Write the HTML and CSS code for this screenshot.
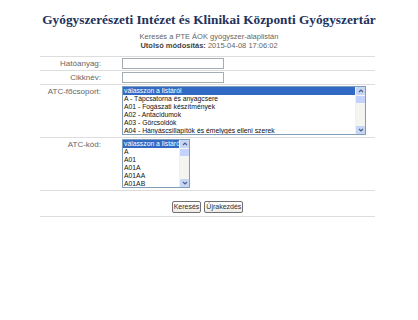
FILE: index.html
```html
<!DOCTYPE html>
<html lang="hu">
<head>
<meta charset="utf-8">
<title>Gyógyszerészeti Intézet és Klinikai Központi Gyógyszertár</title>
<link rel="stylesheet" href="styles.css">
</head>
<body>
<h1 class="title">Gyógyszerészeti Intézet és Klinikai Központi Gyógyszertár</h1>
<div class="sub">
  <div>Keresés a PTE ÁOK gyógyszer-alaplistán</div>
  <div><b>Utolsó módosítás:</b> 2015-04-08 17:06:02</div>
</div>
<div class="form">
  <div class="row row-input">
    <div class="label">Hatóanyag:</div>
    <div class="field"><div class="input"></div></div>
  </div>
  <div class="row row-input">
    <div class="label">Cikknév:</div>
    <div class="field"><div class="input"></div></div>
  </div>
  <div class="row row-list">
    <div class="label">ATC-főcsoport:</div>
    <div class="field">
      <div class="listbox wide">
        <div class="items">
          <div class="item sel">válasszon a listáról</div>
          <div class="item">A - Tápcsatorna és anyagcsere</div>
          <div class="item">A01 - Fogászati készítmények</div>
          <div class="item">A02 - Antacidumok</div>
          <div class="item">A03 - Görcsoldók</div>
          <div class="item">A04 - Hányáscsillapítók és émelygés elleni szerek</div>
        </div>
        <div class="sbar">
          <div class="sbtn"><svg viewBox="0 0 8 8" width="8" height="8"><path d="M2 5 L4 3 L6 5" fill="none" stroke="#4d6185" stroke-width="1.2"/></svg></div>
          <div class="thumb"></div>
          <div class="track"></div>
          <div class="sbtn"><svg viewBox="0 0 8 8" width="8" height="8"><path d="M2 3 L4 5 L6 3" fill="none" stroke="#4d6185" stroke-width="1.2"/></svg></div>
        </div>
      </div>
    </div>
  </div>
  <div class="row row-list">
    <div class="label">ATC-kód:</div>
    <div class="field">
      <div class="listbox narrow">
        <div class="items">
          <div class="item sel">válasszon a listáról</div>
          <div class="item">A</div>
          <div class="item">A01</div>
          <div class="item">A01A</div>
          <div class="item">A01AA</div>
          <div class="item">A01AB</div>
        </div>
        <div class="sbar">
          <div class="sbtn"><svg viewBox="0 0 8 8" width="8" height="8"><path d="M2 5 L4 3 L6 5" fill="none" stroke="#4d6185" stroke-width="1.2"/></svg></div>
          <div class="thumb"></div>
          <div class="track"></div>
          <div class="sbtn"><svg viewBox="0 0 8 8" width="8" height="8"><path d="M2 3 L4 5 L6 3" fill="none" stroke="#4d6185" stroke-width="1.2"/></svg></div>
        </div>
      </div>
    </div>
  </div>
  <div class="row row-buttons">
    <span class="btn">Keresés</span>
    <span class="btn">Újrakezdés</span>
  </div>
</div>
</body>
</html>
```
FILE: styles.css
```css
html, body {
  margin: 0;
  padding: 0;
  background: #ffffff;
}
body {
  font-family: "Liberation Sans", Arial, sans-serif;
  color: #333333;
}
.title {
  margin: 0;
  padding-top: 12px;
  font-family: "Liberation Serif", "Times New Roman", serif;
  font-size: 13.3px;
  line-height: 16px;
  font-weight: bold;
  color: #22315a;
  text-align: center;
}
.sub {
  margin-top: 4px;
  font-size: 7.5px;
  line-height: 9px;
  color: #666666;
  text-align: center;
}
.sub b {
  color: #444444;
}
.form {
  width: 335px;
  margin: 6px 0 0 40px;
  border-top: 1px solid #dddddd;
}
.row {
  display: flex;
  border-bottom: 1px solid #dddddd;
}
.label {
  width: 61px;
  padding-right: 21px;
  text-align: right;
  font-size: 8px;
  line-height: 9px;
  color: #666666;
}
.row-input {
  height: 13px;
}
.row-input .label {
  padding-top: 2px;
}
.row-input .field {
  padding-top: 1px;
}
.input {
  width: 100px;
  height: 9px;
  border: 1px solid #a5acb2;
  background: #ffffff;
}
.row-list {
  height: 52px;
}
.row-list .label {
  padding-top: 2px;
}
.row-list .field {
  padding-top: 1px;
}
.listbox {
  display: flex;
  height: 47px;
  border: 1px solid #7f9db9;
  background: #ffffff;
  overflow: hidden;
}
.listbox.wide {
  width: 242px;
}
.listbox.narrow {
  width: 66px;
}
.items {
  flex: 1;
  min-width: 0;
  overflow: hidden;
}
.item {
  height: 8px;
  line-height: 8px;
  font-size: 6.8px;
  color: #111111;
  white-space: nowrap;
  padding-left: 1px;
}
.item.sel {
  background: #316ac5;
  color: #ffffff;
}
.sbar {
  width: 9px;
  display: flex;
  flex-direction: column;
  background: #f4f4f0;
  border-left: 1px solid #eef0f4;
}
.sbtn {
  height: 8px;
  display: flex;
  align-items: center;
  justify-content: center;
  background: #c8d6f6;
  border-radius: 1px;
}
.sbtn svg {
  display: block;
}
.thumb {
  height: 7px;
  margin-top: 1px;
  background: #c3d3fd;
}
.track {
  flex: 1;
}
.row-buttons {
  height: 25px;
  justify-content: center;
  align-items: flex-start;
  gap: 3px;
}
.btn {
  margin-top: 10px;
  height: 10px;
  line-height: 10px;
  padding: 0 1px;
  font-size: 7px;
  color: #333333;
  border: 1px solid #707070;
  border-radius: 2px;
  background: linear-gradient(#ffffff, #ecebe6);
}
```
